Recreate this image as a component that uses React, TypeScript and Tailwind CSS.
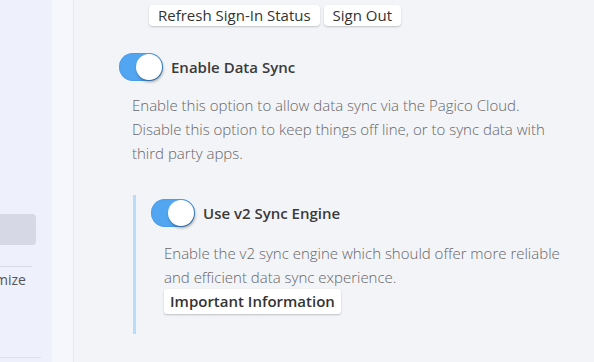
import React from "react";

function Toggle() {
  return (
    <div className="relative h-[28px] w-[44px] shrink-0 rounded-full bg-[#52a6f1] shadow-[inset_0_0_0_1px_rgba(60,140,220,0.35)]">
      <div className="absolute right-[1px] top-[1px] h-[26px] w-[26px] rounded-full bg-white shadow-[1px_2px_3px_rgba(0,0,0,0.35)]" />
    </div>
  );
}

export default function App() {
  return (
    <div className="flex h-[362px] w-[594px] overflow-hidden bg-[#f3f4f8]">
      {/* sidebar */}
      <div className="flex w-[52px] shrink-0 flex-col bg-[#eef0fb] pt-[214px]">
        <div className="ml-[-10px] h-[31px] w-[46px] rounded-[4px] bg-[#d6d9e5]" />
        <div className="mt-[21px] h-px w-[32px] bg-[#d8dae3]" />
        <div className="flex w-[26px] justify-end overflow-hidden whitespace-nowrap pt-[3px] text-[14px] leading-[20px] text-[#555] [font-family:'Open_Sans',sans-serif]">
          Customize
        </div>
        <div className="mt-[67px] h-px w-[41px] bg-[#dfe1ea]" />
      </div>
      <div className="w-[22px] shrink-0 border-r border-[#e8e9f0] bg-[#f6f7fd]" />
      {/* main */}
      <div className="flex-1 pl-[45px] pt-[5px] text-[#333] [font-family:'Open_Sans',sans-serif]">
        <div className="flex gap-[4px] pl-[30px]">
          <button className="h-[21px] whitespace-nowrap rounded-[4px] bg-white px-[9px] text-[15px] leading-[21px] text-[#333] shadow-[0_1px_2px_rgba(0,0,0,0.2)] [font-family:'Open_Sans',sans-serif]">
            Refresh Sign-In Status
          </button>
          <button className="h-[21px] whitespace-nowrap rounded-[4px] bg-white px-[9px] text-[15px] leading-[21px] text-[#333] shadow-[0_1px_2px_rgba(0,0,0,0.2)] [font-family:'Open_Sans',sans-serif]">
            Sign Out
          </button>
        </div>

        <div className="mt-[27px] flex items-center gap-[8px]">
          <Toggle />
          <span className="text-[15px] font-semibold text-[#3a3a3a]">Enable Data Sync</span>
        </div>
        <p className="mt-[12px] w-[440px] pl-[13px] text-[15px] font-light leading-[24px] text-[#666]">
          Enable this option to allow data sync via the Pagico Cloud. Disable this option to keep things off line, or to sync data with third party apps.
        </p>

        <div className="ml-[14px] mt-[30px] border-l-[3px] border-[#badcfb] pb-[20px] pl-[15px] pt-[4px]">
          <div className="flex items-center gap-[8px]">
            <Toggle />
            <span className="text-[15px] font-semibold text-[#3a3a3a]">Use v2 Sync Engine</span>
          </div>
          <p className="mt-[14px] w-[420px] pl-[13px] text-[15px] font-light leading-[24px] text-[#666]">
            Enable the v2 sync engine which should offer more reliable and efficient data sync experience.
          </p>
          <div className="pl-[13px]">
            <button className="h-[25px] rounded-[3px] bg-white px-[6px] text-[15px] font-semibold leading-[25px] text-[#333] shadow-[0_1px_2px_rgba(0,0,0,0.22)]">
              Important Information
            </button>
          </div>
        </div>
      </div>
    </div>
  );
}
